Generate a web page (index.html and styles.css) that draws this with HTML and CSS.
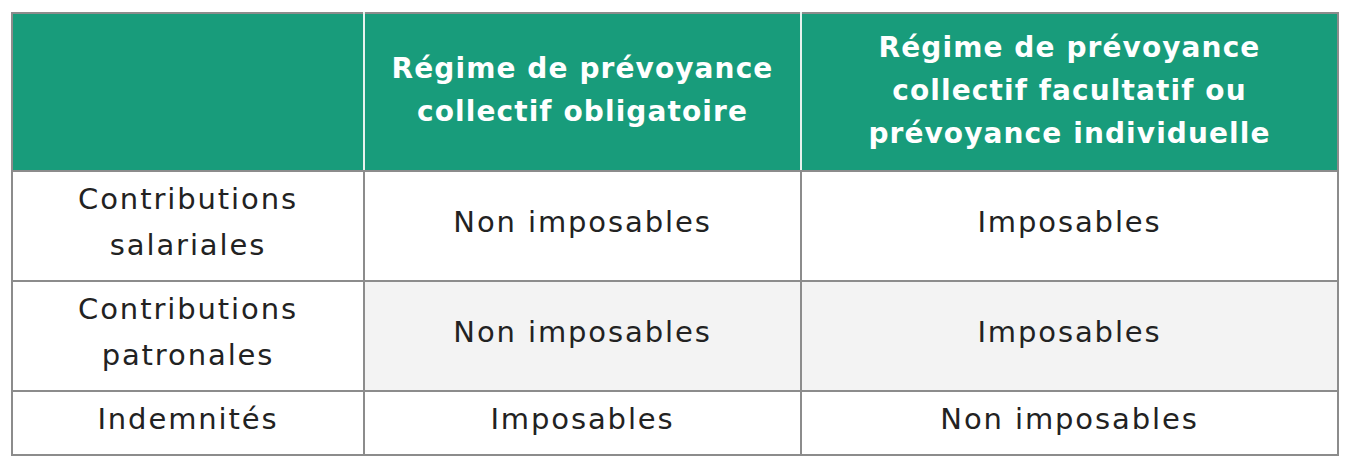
FILE: index.html
```html
<!DOCTYPE html>
<html lang="fr">
<head>
<meta charset="utf-8">
<link rel="stylesheet" href="styles.css">
</head>
<body>
<div class="page">
<table class="grid">
  <colgroup>
    <col class="c1"><col class="c2"><col class="c3">
  </colgroup>
  <thead>
    <tr class="head">
      <th></th>
      <th>Régime de prévoyance<br>collectif obligatoire</th>
      <th>Régime de prévoyance<br>collectif facultatif ou<br>prévoyance individuelle</th>
    </tr>
  </thead>
  <tbody>
    <tr class="r1">
      <td>Contributions<br>salariales</td>
      <td>Non imposables</td>
      <td>Imposables</td>
    </tr>
    <tr class="r2 alt">
      <td>Contributions<br>patronales</td>
      <td>Non imposables</td>
      <td>Imposables</td>
    </tr>
    <tr class="r3">
      <td>Indemnités</td>
      <td>Imposables</td>
      <td>Non imposables</td>
    </tr>
  </tbody>
</table>
</div>
</body>
</html>
```
FILE: styles.css
```css
html, body {
  margin: 0;
  padding: 0;
  background: #ffffff;
}
.page {
  padding: 12px 0 0 11px;
}
.grid {
  border-collapse: collapse;
  table-layout: fixed;
  width: 1326px;
  font-family: "DejaVu Sans", "Open Sans", sans-serif;
  color: #222222;
}
.c1 { width: 352px; }
.c2 { width: 437px; }
.c3 { width: 537px; }
.grid th, .grid td {
  border: 2px solid #8c8c8c;
  text-align: center;
  vertical-align: middle;
  padding: 0;
}
.head th {
  background: #189c7b;
  color: #ffffff;
  font-weight: 700;
  font-size: 28px;
  letter-spacing: 1.1px;
  line-height: 43px;
  height: 152px;
  padding-bottom: 4px;
  border-left-color: #e6f3ee;
  border-right-color: #e6f3ee;
}
.head th:first-child { border-left-color: #8c8c8c; }
.head th:last-child { border-right-color: #8c8c8c; }
.grid td {
  font-size: 29px;
  letter-spacing: 1.9px;
  line-height: 46px;
  font-weight: 400;
  padding-bottom: 8px;
}
.r1 td, .r2 td { height: 100px; }
.r3 td { height: 54px; }
.alt td { background: #f3f3f3; }
.alt td:first-child { background: #ffffff; }
```
